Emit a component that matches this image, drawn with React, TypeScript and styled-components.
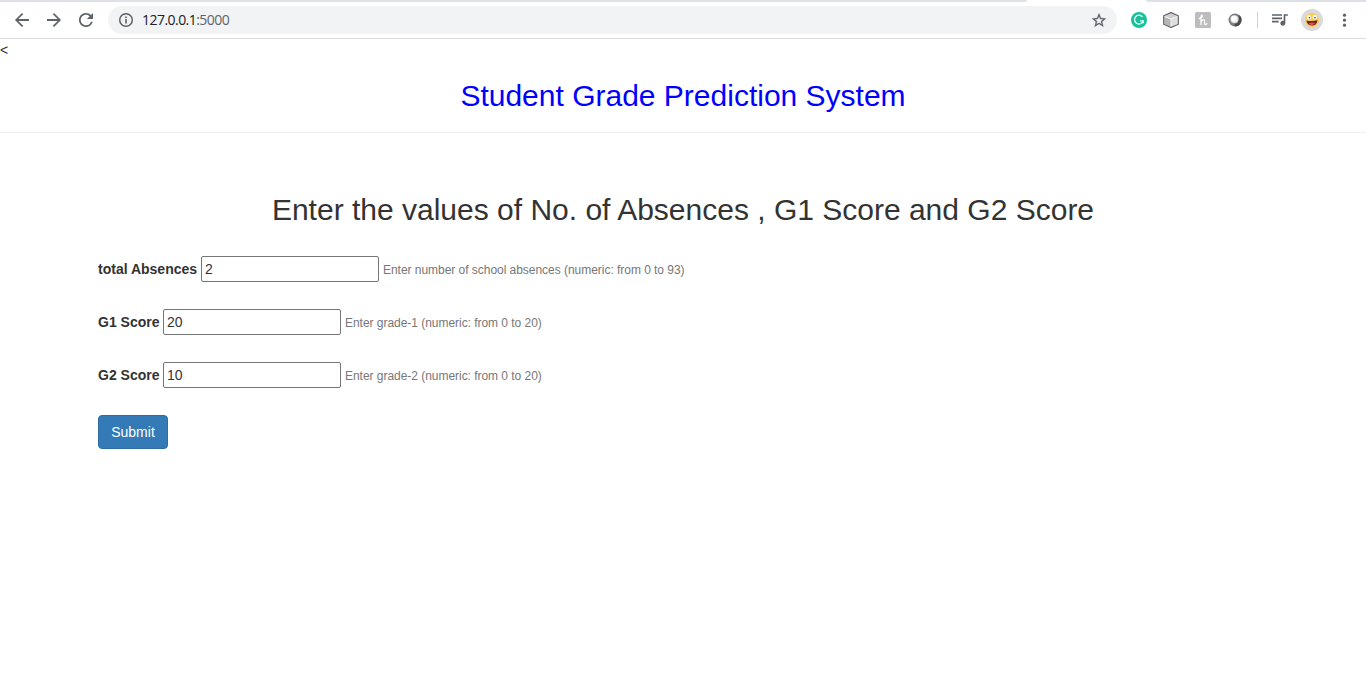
import React from "react";
import styled, { createGlobalStyle } from "styled-components";

const GlobalStyle = createGlobalStyle`
  * { box-sizing: border-box; }
  html, body { margin: 0; padding: 0; background: #fff; }
  body { font-family: "Liberation Sans", Arial, sans-serif; font-size: 14px; line-height: 20px; color: #333; overflow: hidden; }
`;

const Window = styled.div`
  width: 1366px;
  height: 692px;
  background: #fff;
  overflow: hidden;
`;

const TabStrip = styled.div`
  display: flex;
  justify-content: space-between;
  height: 2px;
`;

const StripPart = styled.div<{ $width: number; $side: "left" | "right" }>`
  width: ${(p) => p.$width}px;
  background: #dee1e6;
  border-radius: ${(p) => (p.$side === "left" ? "0 0 2px 0" : "0 0 0 2px")};
`;

const Toolbar = styled.div`
  display: flex;
  align-items: center;
  height: 37px;
  padding: 0 10px 0 12px;
  border-bottom: 1px solid #dadce0;
`;

const NavButtons = styled.div`
  display: flex;
  gap: 12px;
  width: 96px;
`;

const Icon = styled.svg<{ $size?: number }>`
  display: block;
  flex: none;
  width: ${(p) => p.$size ?? 20}px;
  height: ${(p) => p.$size ?? 20}px;
`;

const AddressBar = styled.div`
  display: flex;
  align-items: center;
  width: 1009px;
  height: 28px;
  padding: 0 10px;
  border-radius: 14px;
  background: #f1f3f4;
`;

const Url = styled.div`
  flex: 1;
  padding-left: 8px;
  font: 14px/20px "Open Sans", "Noto Sans", sans-serif;
  letter-spacing: -0.54px;
  color: #202124;
`;

const Port = styled.span`
  color: #5f6368;
`;

const Extensions = styled.div`
  display: flex;
  align-items: center;
  gap: 16px;
  margin-left: 14px;
`;

const Divider = styled.div`
  width: 1px;
  height: 16px;
  margin: 0 12px 0 14px;
  background: #d0d3d7;
`;

const Profile = styled.div`
  display: flex;
  align-items: center;
  justify-content: center;
  width: 22px;
  height: 22px;
  margin: 0 12px 0 11px;
  border-radius: 50%;
  background: #dadada;
`;

const StrayText = styled.div`
  height: 20px;
  margin-top: 1px;
  line-height: 20px;
`;

const SiteHeader = styled.header`
  height: 73px;
  padding-top: 19px;
  border-bottom: 1px solid #eee;
`;

const Title = styled.h1<{ $color: string }>`
  margin: 0;
  font-size: 30px;
  font-weight: 400;
  line-height: 33px;
  text-align: center;
  color: ${(p) => p.$color};
`;

const Main = styled.main`
  padding-top: 60px;
`;

const Form = styled.form`
  display: flex;
  flex-direction: column;
  align-items: flex-start;
  gap: 27px;
  padding: 30px 98px 0;
`;

const Field = styled.div`
  display: flex;
  align-items: center;
  height: 26px;
`;

const Label = styled.label<{ $width: number }>`
  width: ${(p) => p.$width}px;
  font-weight: 700;
  white-space: nowrap;
`;

const Input = styled.input`
  width: 178px;
  height: 26px;
  margin: 0;
  padding: 1px 3px;
  border: 1px solid #767676;
  border-radius: 2px;
  background: #fff;
  color: #333;
  font: 14px/20px "Liberation Sans", Arial, sans-serif;
  outline: none;
`;

const Hint = styled.small`
  padding: 1px 0 0 4px;
  font-size: 12px;
  color: #777;
  letter-spacing: -0.035px;
  white-space: nowrap;
`;

const Submit = styled.button`
  width: 70px;
  height: 34px;
  padding: 0;
  border: 1px solid #2e6da4;
  border-radius: 4px;
  background: #337ab7;
  color: #fff;
  font: 14px/20px "Liberation Sans", Arial, sans-serif;
`;

const fields = [
  { id: "absences", label: "total Absences", width: 103, value: "2", hint: "Enter number of school absences (numeric: from 0 to 93)" },
  { id: "g1", label: "G1 Score", width: 65, value: "20", hint: "Enter grade-1 (numeric: from 0 to 20)" },
  { id: "g2", label: "G2 Score", width: 65, value: "10", hint: "Enter grade-2 (numeric: from 0 to 20)" },
];

const NAV_BOX = "0.6 0.6 22.8 22.8";

function BrowserBar() {
  return (
    <>
      <TabStrip>
        <StripPart $width={1027} $side="left" />
        <StripPart $width={220} $side="right" />
      </TabStrip>
      <Toolbar>
        <NavButtons>
          <Icon viewBox={NAV_BOX} fill="#5f6368">
            <path d="M20 11H7.83l5.59-5.59L12 4l-8 8 8 8 1.41-1.41L7.83 13H20v-2z" />
          </Icon>
          <Icon viewBox={NAV_BOX} fill="#5f6368">
            <path d="M12 4l-1.41 1.41L16.17 11H4v2h12.17l-5.58 5.59L12 20l8-8z" />
          </Icon>
          <Icon viewBox={NAV_BOX} fill="#5f6368">
            <path d="M17.65 6.35A7.958 7.958 0 0 0 12 4c-4.42 0-7.99 3.58-7.99 8s3.57 8 7.99 8c3.73 0 6.84-2.55 7.73-6h-2.08A5.99 5.99 0 0 1 12 18c-3.31 0-6-2.69-6-6s2.69-6 6-6c1.66 0 3.14.69 4.22 1.78L13 11h7V4l-2.35 2.35z" />
          </Icon>
        </NavButtons>
        <AddressBar>
          <Icon $size={16} viewBox="0 0 16 16">
            <circle cx="8" cy="8" r="6.3" fill="none" stroke="#5f6368" strokeWidth="1.5" />
            <path d="M7.2 7.1h1.6v4.3H7.2zM7.2 4.5h1.6v1.6H7.2z" fill="#5f6368" />
          </Icon>
          <Url>127.0.0.1<Port>:5000</Port></Url>
          <Icon $size={16} viewBox="0.6 0.1 22.8 22.8" fill="#5f6368">
            <path d="M22 9.24l-7.19-.62L12 2 9.19 8.63 2 9.24l5.46 4.73L5.82 21 12 17.27 18.18 21l-1.63-7.03L22 9.24zM12 15.4l-3.76 2.27 1-4.28-3.32-2.88 4.38-.38L12 6.1l1.71 4.04 4.38.38-3.32 2.88 1 4.28L12 15.4z" stroke="#5f6368" strokeWidth=".4" />
          </Icon>
        </AddressBar>
        <Extensions>
          <Icon $size={16} viewBox="0 0 16 16">
            <circle cx="8" cy="8" r="8" fill="#15c39a" />
            <path d="M11.5 5A4.4 4.4 0 1 0 12.2 8.8H9.2M12.2 8.6v2.7" fill="none" stroke="#fff" strokeWidth="1.2" />
          </Icon>
          <Icon $size={16} viewBox="0 0 16 16" strokeLinejoin="round">
            <path d="M8 .6l7.3 3.2v8.5L8 15.5.7 12.3V3.8z" fill="#c8c8c8" stroke="#626262" strokeWidth="1.2" />
            <path d="M1.5 4.2L8 1.4l6.5 2.8L8 7z" fill="#cfcfcf" />
            <path d="M1.5 4.7L8 7.2v7.4l-6.5-2.7z" fill="#b4b4b4" />
            <path d="M8 7.2l6.5-2.7v7.4L8 14.6z" fill="#dedede" />
            <path d="M1.7 4.5L8 7v7.4M8 7l6.3-2.6" fill="none" stroke="#f4f4f4" strokeWidth="1" />
          </Icon>
          <Icon $size={16} viewBox="0 0 16 16">
            <rect width="16" height="16" rx="1.5" fill="#bdbdbd" />
            <path d="M4.2 6.6C6 6 7.6 4.9 7.3 3.7 7 2.6 6 3.4 6 5v7.7M6 10c.8-2 3.5-3.3 3.6-1 0 1.300-.5 2.500.2 3.300.7.7 1.600.1 2-.9" fill="none" stroke="#fff" strokeWidth="1.25" strokeLinecap="round" />
          </Icon>
          <Icon $size={16} viewBox="0 0 16 16">
            <circle cx="8" cy="8" r="6.5" fill="#7c7c7c" />
            <path d="M12.200 3A6.500 6.500 0 0 1 8 14.500l-.6-2.500A5 5 0 0 0 12 7.500z" fill="#4b4b4b" />
            <circle cx="7.400" cy="7.300" r="4" fill="#dcdcdc" />
            <circle cx="7.200" cy="6.800" r="3" fill="#fff" />
          </Icon>
        </Extensions>
        <Divider />
        <Icon viewBox="0.6 1 24 24" fill="#5f6368">
          <path d="M15 6H3v2h12V6zm0 4H3v2h12v-2zM3 16h8v-2H3v2zM17 6v8.180c-.31-.11-.65-.18-1-.18-1.660 0-3 1.340-3 3s1.340 3 3 3 3-1.340 3-3V8h3V6h-5z" />
        </Icon>
        <Profile>
          <Icon $size={16} viewBox="0 0 16 16">
            <circle cx="8" cy="8" r="7" fill="#f8cd54" />
            <ellipse cx="5" cy="5.4" rx="2" ry="2.2" fill="#fff" />
            <ellipse cx="10.8" cy="5.2" rx="2.1" ry="2.3" fill="#fff" />
            <circle cx="5.4" cy="5.8" r=".8" fill="#333" />
            <circle cx="11" cy="5.7" r=".8" fill="#333" />
            <path d="M2.500 8.500c3 .8 7.500.7 11-.3-.3 3.300-2.400 5.300-5.400 5.300S2.800 11.700 2.500 8.500z" fill="#71231c" />
            <path d="M4.700 11.200c2-1 4.500-1 6.600-.2-1.500 2.500-5 2.700-6.600.2z" fill="#e84b55" />
          </Icon>
        </Profile>
        <Icon viewBox="0 0 20 20" fill="#5f6368">
          <circle cx="9.500" cy="5.200" r="1.600" />
          <circle cx="9.500" cy="10.200" r="1.600" />
          <circle cx="9.500" cy="15.200" r="1.600" />
        </Icon>
      </Toolbar>
    </>
  );
}

export default function App() {
  return (
    <Window>
      <GlobalStyle />
      <BrowserBar />
      <StrayText>&lt;</StrayText>
      <SiteHeader>
        <Title $color="#0000ff">Student Grade Prediction System</Title>
      </SiteHeader>
      <Main>
        <Title as="h2" $color="#333">Enter the values of No. of Absences , G1 Score and G2 Score</Title>
        <Form onSubmit={(e) => e.preventDefault()}>
          {fields.map((f) => (
            <Field key={f.id}>
              <Label htmlFor={f.id} $width={f.width}>{f.label}</Label>
              <Input id={f.id} type="text" defaultValue={f.value} />
              <Hint>{f.hint}</Hint>
            </Field>
          ))}
          <Submit type="submit">Submit</Submit>
        </Form>
      </Main>
    </Window>
  );
}
